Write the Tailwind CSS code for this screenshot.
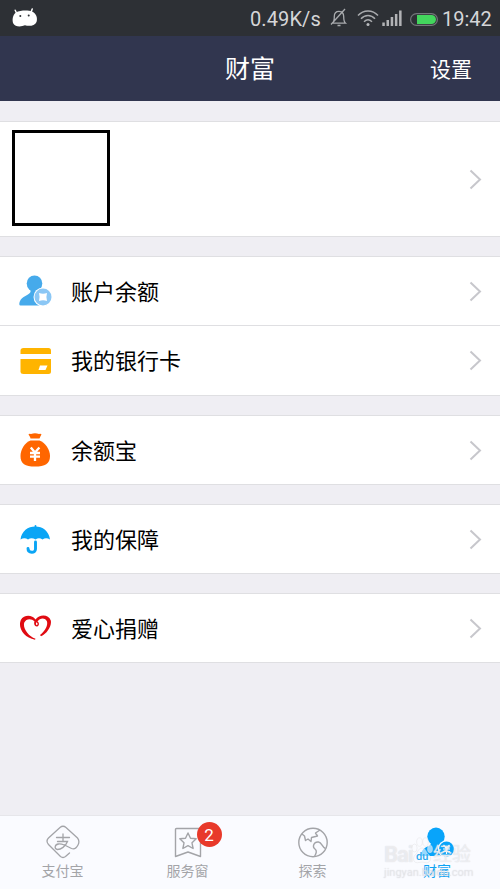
<!DOCTYPE html>
<html lang="zh-CN">
<head>
    <meta charset="UTF-8">
    <meta name="viewport" content="width=device-width, initial-scale=1.0">
    <title>财富</title>
    <script src="https://cdn.jsdelivr.net/npm/@tailwindcss/browser@4"></script>
</head>
<body class="bg-[#efeef3] font-['Roboto','Noto_Sans_CJK_SC',sans-serif]">
    <div class="flex flex-col w-[500px] h-[889px] overflow-hidden">
        <!-- Status bar -->
        <div class="flex items-center justify-between h-9 shrink-0 bg-[#2d3035] pl-3 pr-2 text-[#d5d6d8]">
            <svg class="w-[26px] h-5" viewBox="0 0 26 20">
                <path d="M3.2 2.2L5 6M20.200 1L18.800 5" stroke="#fff" stroke-width="1.500" stroke-linecap="round" />
                <path d="M4 4.500C8 2.300 16 2 20 3.500C24 5 26 10 24.500 14C23 18 17 18.500 13 17.300C9 19 3 19 1.300 15.500C0 12 .5 7 4 4.500Z" fill="#fff" />
                <circle cx="8.300" cy="8" r="1" fill="#2d3035" />
                <circle cx="16.700" cy="7.500" r="1" fill="#2d3035" />
            </svg>
            <div class="flex items-center">
                <span class="w-[71px] mr-[9px] pt-px text-[20px] tracking-[0.1px] leading-9 whitespace-nowrap">0.49K/s</span>
                <svg class="w-[18px] h-[20px] mr-[9px]" viewBox="0 0 18 20" fill="none" stroke="#a9abae" stroke-width="1.300">
                    <path d="M2.500 15.200H15.500C13.700 13.500 13.700 12 13.700 8.500C13.700 5.300 12 3.300 9 3.300S4.300 5.300 4.300 8.500C4.300 12 4.300 13.500 2.500 15.200ZM7.500 17.500H10.500M1 16.500L15 1" />
                </svg>
                <svg class="w-[22px] h-[18px] mr-[3px]" viewBox="0 0 22 18" fill="none" stroke="#a9abae" stroke-width="1.500">
                    <path d="M1 6.500C6.500 .5 15.500 .5 21 6.500M4 9.700C8 5.300 14 5.300 18 9.700M7 12.700C9.500 10.300 12.500 10.300 15 12.700" />
                    <circle cx="11" cy="15.500" r="1.500" fill="#b9bbbe" stroke="none" />
                </svg>
                <svg class="w-5 h-4 mr-2" viewBox="0 0 20 16" fill="#b2b3b6">
                    <path d="M.3 12.500h2.500v3.500H.3zM4.500 10h2.500v6H4.500zM8.700 7h2.500v9H8.700zM12.900 4h2.500v12h-2.500zM17.100 .5h2.500v15.500h-2.500z" />
                </svg>
                <svg class="w-[28px] h-[13px] mr-[4px] mt-0.5" viewBox="0 0 28 13">
                    <rect x=".6" y=".6" width="26.800" height="11.800" rx="5.900" fill="none" stroke="#73767a" stroke-width="1.200" />
                    <path d="M7 2H21.500A4.500 4.500 0 0 1 21.500 11H7Z" fill="#43d55d" />
                </svg>
                <span class="w-[50px] pt-px text-[20px] leading-9 whitespace-nowrap">19:42</span>
            </div>
        </div>

        <!-- Header -->
        <header class="grid grid-cols-3 items-center h-[65px] shrink-0 bg-[#31364f] text-white">
            <h1 class="col-start-2 pt-0.5 text-center text-[25px] leading-9">财富</h1>
            <a href="#" class="justify-self-end mr-[28px] pt-0.5 text-[21px] leading-8">设置</a>
        </header>

        <!-- Content -->
        <main class="flex-1 flex flex-col gap-[19px] pt-5">
            <section class="flex items-center justify-between h-[116px] bg-white border-y border-[#dfdfe2] pl-3 pr-[18px]">
                <div class="w-[98px] h-[96px] -mt-0.5 border-[3px] border-black"></div>
                <svg class="w-[13px] h-[21px]" viewBox="0 0 13 21" fill="none" stroke="#c7c7cc" stroke-width="2"><path d="M1.500 1.500L11 10.500L1.500 19.500" /></svg>
            </section>

            <section class="bg-white border-y border-[#dfdfe2]">
                <a href="#" class="flex items-center h-[68px] pl-[19px] pr-[18px]">
                    <svg class="w-[34px] h-[32px]" viewBox="0 0 34 32">
                        <ellipse cx="15.500" cy="8.500" rx="7.800" ry="8" fill="#46aaeb" />
                        <path d="M11.500 13H19.500V17C21 19 27 19 28 27V30.500H1.500C0 30.500 0 28.500 .8 26.500C2.500 21.500 10.500 20 11.500 17Z" fill="#46aaeb" />
                        <circle cx="24" cy="22" r="9.500" fill="#fff" />
                        <circle cx="24" cy="22" r="8.500" fill="#8bc7f5" />
                        <path d="M20 18Q24 19.500 28 18Q26.800 22 28 26Q24 24.500 20 26Q21.200 22 20 18Z" fill="#fff" />
                    </svg>
                    <span class="flex-1 ml-[18px] pt-[3px] text-[22px] leading-8 text-black">账户余额</span>
                    <svg class="w-[13px] h-[21px]" viewBox="0 0 13 21" fill="none" stroke="#c7c7cc" stroke-width="2"><path d="M1.500 1.500L11 10.500L1.500 19.500" /></svg>
                </a>
                <a href="#" class="flex items-center h-[70px] border-t border-[#dfdfe2] pl-[19px] pr-[18px]">
                    <svg class="w-[34px] h-[26px]" viewBox="0 0 34 26" fill="#ffb400">
                        <path d="M4.500 0H29.500Q32 0 32 2.500V6H1.500V2.500Q1.500 0 4.500 0Z" />
                        <path d="M1.500 11H32V23.500Q32 26 29.500 26H4.500Q1.500 26 1.500 23.500Z" />
                        <path d="M21 17.500H28.500L26.500 22H19.500Z" fill="#fff" />
                    </svg>
                    <span class="flex-1 ml-[18px] pt-[3px] text-[22px] leading-8 text-black">我的银行卡</span>
                    <svg class="w-[13px] h-[21px]" viewBox="0 0 13 21" fill="none" stroke="#c7c7cc" stroke-width="2"><path d="M1.500 1.500L11 10.500L1.500 19.500" /></svg>
                </a>
            </section>

            <section class="bg-white border-y border-[#dfdfe2]">
                <a href="#" class="flex items-center h-[68px] pl-[19px] pr-[18px]">
                    <svg class="w-[34px] h-[34px]" viewBox="0 0 34 34">
                        <path d="M9.500 1.500Q10 .5 12 1Q16 -.5 20 1Q22 .5 22.500 1.500Q21.500 3 20.500 5.500H11.500Q11 3.500 9.500 1.500Z" fill="#ff6600" />
                        <path d="M11.500 7.500H20.500C26.500 10 31 16.500 31 23C31 31 26 33.500 16 33.500S1.500 31 1.500 23C1.500 16.500 5.500 10 11.500 7.500Z" fill="#ff6600" />
                        <path d="M11.800 14.500L16 19.500L20.400 14.500M16 19.500V28M11 20H21M11 23.700H21" fill="none" stroke="#fff" stroke-width="2.300" />
                    </svg>
                    <span class="flex-1 ml-[18px] pt-[3px] text-[22px] leading-8 text-black">余额宝</span>
                    <svg class="w-[13px] h-[21px]" viewBox="0 0 13 21" fill="none" stroke="#c7c7cc" stroke-width="2"><path d="M1.500 1.500L11 10.500L1.500 19.500" /></svg>
                </a>
            </section>

            <section class="bg-white border-y border-[#dfdfe2]">
                <a href="#" class="flex items-center h-[68px] pl-[19px] pr-[18px]">
                    <svg class="w-[34px] h-[29px]" viewBox="0 0 34 29">
                        <path d="M16.500 1V3" fill="none" stroke="#0aa5f5" stroke-width="1.800" stroke-linecap="round" />
                        <path d="M16.500 17V24C16.500 28.500 9 28.500 9 23.500" fill="none" stroke="#0aa5f5" stroke-width="2.900" stroke-linecap="round" />
                        <path d="M1.500 14.500C2.500 6 9 1.500 16.300 1.500S30 6 31 14.500Q27 12 23.500 14.500Q20 12 16.500 14.500Q12.500 12 9 14.500Q5.500 12 1.500 14.500Z" fill="#0aa5f5" />
                    </svg>
                    <span class="flex-1 ml-[18px] pt-[3px] text-[22px] leading-8 text-black">我的保障</span>
                    <svg class="w-[13px] h-[21px]" viewBox="0 0 13 21" fill="none" stroke="#c7c7cc" stroke-width="2"><path d="M1.500 1.500L11 10.500L1.500 19.500" /></svg>
                </a>
            </section>

            <section class="bg-white border-y border-[#dfdfe2]">
                <a href="#" class="flex items-center h-[68px] pl-[19px] pr-[18px]">
                    <svg class="w-[34px] h-[26px]" viewBox="0 0 34 26" fill="#e00b12">
                        <path d="M16.500 4.500C13 -.5 5 -.5 1.800 5C-1.500 13 5 23 16 24.800L16.500 23.800C9 21 3.500 13 5.300 7.500C7 3.500 12.500 3 15.500 6.500C14.500 8.500 15.500 11.500 18 11.500C20.500 11 20.500 7.500 18.500 6.500C21 2.500 26.500 2.500 28 6.500C29 11 26 16 21 20L22 21.300C28 18.500 33 11 31.800 5.500C29.500 -1 20.500 -1 16.500 4.500ZM17.500 7.300Q19.300 8.500 18 10.200Q16.200 9.500 17.500 7.300Z" />
                    </svg>
                    <span class="flex-1 ml-[18px] pt-[3px] text-[22px] leading-8 text-black">爱心捐赠</span>
                    <svg class="w-[13px] h-[21px]" viewBox="0 0 13 21" fill="none" stroke="#c7c7cc" stroke-width="2"><path d="M1.500 1.500L11 10.500L1.500 19.500" /></svg>
                </a>
            </section>
        </main>

        <!-- Tab bar -->
        <nav class="relative grid grid-cols-4 h-[74px] shrink-0 bg-[#fafbff] border-t border-[#e6e6ea] text-[14px] leading-5 text-[#a3a4a8]">
            <a href="#" class="flex flex-col items-center pt-2">
                <svg class="w-[34px] h-[36px]" viewBox="0 0 34 36" fill="none" stroke="#a3a4a8" stroke-width="1.300" stroke-linecap="round">
                    <path d="M23.500 29L19.500 32.500Q17 34.500 14.500 32.500L2.500 20.500Q-.5 17 2.500 14L14 3.500Q17 1 20 3.500L31.500 14Q34 17 32 21Q29.500 26 25.500 24.500L18.500 21" />
                    <path d="M10.500 13.500H23.500M17 10V17.500M11.500 17.500H21.500C19.500 22.500 15 25.500 11.500 25.500C8 25 8.500 20.500 12.500 20Q15 19.800 18.500 21" />
                </svg>
                <span class="pt-px">支付宝</span>
            </a>
            <a href="#" class="flex flex-col items-center pt-2">
                <div class="relative">
                    <svg class="w-[28px] h-[36px]" viewBox="0 0 28 36" fill="none" stroke="#a3a4a8" stroke-width="1.400" stroke-linejoin="round">
                        <path d="M2.500 4.500H25.500Q26.500 4.500 26.500 5.500V32.500L14 28L1.500 32.500V5.500Q1.500 4.500 2.500 4.500Z" />
                        <path d="M14 9L16.500 14.200L22.200 14.800L18 18.800L19.100 24.500L14 21.700L8.900 24.500L10 18.800L5.800 14.800L11.500 14.200Z" />
                    </svg>
                    <span class="absolute left-[23px] -top-[2px] flex items-center justify-center w-[25px] h-[25px] rounded-full bg-[#e8392a] pt-px text-[17px] text-white">2</span>
                </div>
                <span class="pt-px">服务窗</span>
            </a>
            <a href="#" class="flex flex-col items-center pt-2">
                <svg class="w-[32px] h-[36px]" viewBox="0 0 32 36" fill="none" stroke="#a3a4a8" stroke-width="1.400" stroke-linejoin="round">
                    <circle cx="16" cy="18.500" r="14.200" />
                    <path d="M5 10L7.500 12L8.500 16.500L11 15L14 17.500L14.500 13.500L20.500 12L18.500 9L23 6M17.500 32.500C19 30 20.500 27.500 18.500 25.500C14.500 22.500 17 17.500 21.500 18C25 18.500 24.500 22.500 28.500 24.500" />
                </svg>
                <span class="pt-px">探索</span>
            </a>
            <a href="#" class="flex flex-col items-center pt-2 pr-px text-[#0ca4f4]">
                <svg class="w-[36px] h-[36px]" viewBox="0 0 36 36">
                    <ellipse cx="17" cy="12.500" rx="8.700" ry="9" fill="#08a4fa" />
                    <path d="M12 16H22V20L29 25V32H2.500C1.500 26 6 23.500 10 22Q12 21 12 19Z" fill="#08a4fa" />
                    <circle cx="27.500" cy="25" r="8.700" fill="#fafbff" />
                    <circle cx="27.500" cy="25" r="7.500" fill="#08a4fa" />
                    <path d="M24.500 21L27.500 24.500L30.500 21M27.500 24.500V30M24 25H31M24 27.500H31" fill="none" stroke="#fff" stroke-width="1.200" />
                </svg>
                <span class="pt-px">财富</span>
            </a>

            <!-- Watermark -->
            <div class="absolute left-[384px] top-[20px] w-[92px] pointer-events-none text-[#fafbff]/60 [text-shadow:0_0_1px_#d2d2d6]">
                <div class="relative flex items-end h-[31px] font-bold leading-6">
                    <span class="w-[27px] text-[22px] tracking-[-1px]">Bai</span>
                    <svg class="w-[22px] h-[31px]" viewBox="0 0 22 31" fill="#fafbff" fill-opacity=".6" stroke="#e2e2e4" stroke-width=".5">
                        <ellipse cx="3.500" cy="12" rx="2.600" ry="4" />
                        <ellipse cx="8.500" cy="6" rx="2.800" ry="4.200" />
                        <ellipse cx="14.500" cy="6" rx="2.800" ry="4.200" />
                        <ellipse cx="19" cy="13" rx="2.500" ry="3.800" />
                        <path d="M11 12C15 12 15 17 18 19C22 23 18 28 14 26.500Q11 25.500 8 26.500C3 28 1 23 4 19C7 17 7 12 11 12Z" />
                        <text x="5" y="24" font-size="11" font-weight="500" fill="#2da9ee" fill-opacity="1" stroke="none" class="[text-shadow:none]">du</text>
                    </svg>
                    <span class="text-[19px] font-normal whitespace-nowrap">经验</span>
                </div>
                <div class="text-[11px] leading-3 whitespace-nowrap text-[#fafbff]/30">jingyan.baidu.com</div>
            </div>
        </nav>
    </div>
</body>
</html>
